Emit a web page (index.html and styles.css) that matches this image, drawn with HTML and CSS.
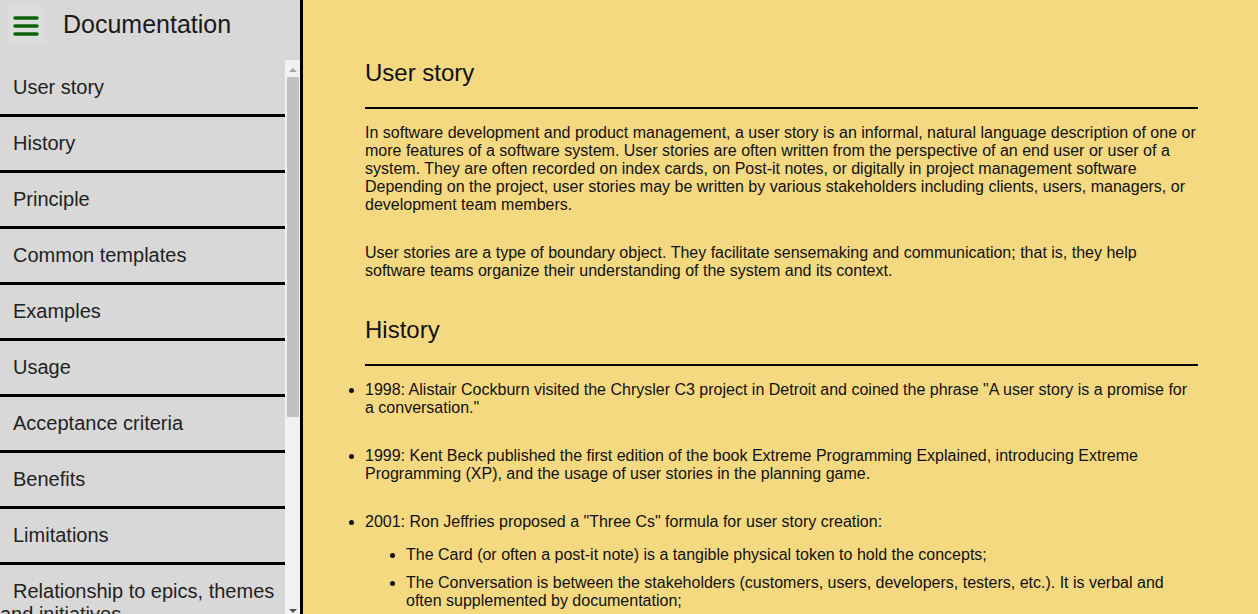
FILE: index.html
```html
<!DOCTYPE html>
<html lang="en">
<head>
<meta charset="utf-8">
<title>Documentation</title>
<link rel="stylesheet" href="styles.css">
</head>
<body>
<div class="page">
  <aside class="sidebar" id="navbar">
    <header class="side-header">
      <button class="menu-btn" aria-label="Menu">
        <svg width="26" height="22" viewBox="0 0 26 22">
          <line x1="2" y1="4" x2="24" y2="4" />
          <line x1="2" y1="12" x2="24" y2="12" />
          <line x1="2" y1="20" x2="24" y2="20" />
        </svg>
      </button>
      <span class="side-title">Documentation</span>
    </header>
    <div class="nav-wrap">
      <nav class="nav">
        <a class="nav-link" href="#User_story">User story</a>
        <a class="nav-link" href="#History">History</a>
        <a class="nav-link" href="#Principle">Principle</a>
        <a class="nav-link" href="#Common_templates">Common templates</a>
        <a class="nav-link" href="#Examples">Examples</a>
        <a class="nav-link" href="#Usage">Usage</a>
        <a class="nav-link" href="#Acceptance_criteria">Acceptance criteria</a>
        <a class="nav-link" href="#Benefits">Benefits</a>
        <a class="nav-link" href="#Limitations">Limitations</a>
        <a class="nav-link" href="#Relationship">Relationship to epics, themes and initiatives</a>
        <a class="nav-link" href="#Story_map">Story map</a>
        <a class="nav-link" href="#Comparison">Comparison with use cases</a>
        <a class="nav-link" href="#See_also">See also</a>
        <a class="nav-link" href="#References">References</a>
        <a class="nav-link" href="#Further_reading">Further reading</a>
      </nav>
      <div class="scrollbar" aria-hidden="true">
        <div class="sb-btn sb-up"><span class="tri tri-up"></span></div>
        <div class="sb-track"><div class="sb-thumb"></div></div>
        <div class="sb-btn sb-down"><span class="tri tri-down"></span></div>
      </div>
    </div>
  </aside>
  <main class="main" id="main-doc">
    <section class="doc-section" id="User_story">
      <h2 class="sec-title">User story</h2>
      <hr class="sec-rule">
      <div class="sec-body">
        <p>In software development and product management, a user story is an informal, natural language description of one or more features of a software system. User stories are often written from the perspective of an end user or user of a system. They are often recorded on index cards, on Post-it notes, or digitally in project management software Depending on the project, user stories may be written by various stakeholders including clients, users, managers, or development team members.</p>
        <p>User stories are a type of boundary object. They facilitate sensemaking and communication; that is, they help software teams organize their understanding of the system and its context.</p>
      </div>
    </section>
    <section class="doc-section" id="History">
      <h2 class="sec-title">History</h2>
      <hr class="sec-rule">
      <div class="sec-body">
        <ul class="list">
          <li>1998: Alistair Cockburn visited the Chrysler C3 project in Detroit and coined the phrase "A user story is a promise for a conversation."</li>
          <li>1999: Kent Beck published the first edition of the book Extreme Programming Explained, introducing Extreme Programming (XP), and the usage of user stories in the planning game.</li>
          <li>2001: Ron Jeffries proposed a "Three Cs" formula for user story creation:
            <ul class="sublist">
              <li>The Card (or often a post-it note) is a tangible physical token to hold the concepts;</li>
              <li>The Conversation is between the stakeholders (customers, users, developers, testers, etc.). It is verbal and often supplemented by documentation;</li>
              <li>The Confirmation ensures that the objectives of the conversation have been reached.</li>
            </ul>
          </li>
        </ul>
      </div>
    </section>
  </main>
</div>
</body>
</html>
```
FILE: styles.css
```css
html, body {
  margin: 0;
  padding: 0;
  height: 100%;
  overflow: hidden;
}

body {
  font-family: "Liberation Sans", Arial, sans-serif;
  color: #111;
}

.page {
  display: flex;
  height: 100vh;
}

.sidebar {
  width: 300px;
  flex: 0 0 300px;
  background: #d8d8d8;
  border-right: 3px solid #000;
  display: flex;
  flex-direction: column;
  min-height: 0;
}

.side-header {
  height: 61px;
  flex: 0 0 61px;
  display: flex;
  align-items: center;
  box-sizing: border-box;
  padding: 0 0 12px 7px;
}

.menu-btn {
  width: 38px;
  height: 38px;
  border: none;
  background: #dcdcdc;
  padding: 0;
  display: flex;
  align-items: center;
  justify-content: center;
  margin-right: 18px;
  cursor: pointer;
}

.menu-btn svg line {
  stroke: #0a640a;
  stroke-width: 3.4;
  stroke-linecap: round;
}

.side-title {
  font-size: 25px;
  color: #1a1a1a;
}

.nav-wrap {
  flex: 1;
  min-height: 0;
  display: flex;
  margin-top: -1px;
}

.nav {
  flex: 1;
  min-width: 0;
  overflow: hidden;
  display: flex;
  flex-direction: column;
  padding-top: 1px;
}

.scrollbar {
  width: 15px;
  flex: 0 0 15px;
  background: #f1f1f1;
  display: flex;
  flex-direction: column;
}

.sb-btn {
  height: 17px;
  flex: 0 0 17px;
  display: flex;
  justify-content: center;
}

.sb-up {
  align-items: center;
  padding-top: 3px;
  box-sizing: border-box;
}

.sb-down {
  align-items: flex-end;
  padding-bottom: 1px;
  box-sizing: border-box;
}

.tri {
  width: 0;
  height: 0;
  border-left: 4px solid transparent;
  border-right: 4px solid transparent;
}

.tri-up {
  border-bottom: 4px solid #a3a3a3;
}

.tri-down {
  border-top: 4px solid #505050;
}

.sb-track {
  flex: 1;
  min-height: 0;
}

.sb-thumb {
  height: 340px;
  margin: 0 1px 0 2px;
  background: #c1c1c1;
}

.nav-link {
  display: block;
  flex: 0 0 auto;
  padding: 15px 0;
  text-indent: 13px;
  font-size: 20px;
  line-height: 23px;
  color: #222;
  text-decoration: none;
  border-bottom: 3px solid #000;
}

.main {
  flex: 1;
  background: #f5d981;
  overflow: hidden;
  padding: 59px 60px 0 62px;
  min-width: 0;
}

.doc-section {
  margin-bottom: 36px;
}

.sec-title {
  margin: 0;
  font-size: 24px;
  line-height: 28px;
  font-weight: normal;
  color: #111;
}

.sec-rule {
  margin: 20px 0 15px;
  border: none;
  height: 2px;
  background: #000;
}

.sec-body {
  font-size: 16px;
  line-height: 18px;
}

.sec-body p {
  margin: 0 0 30px;
}

.sec-body p:last-child {
  margin-bottom: 0;
}

.list {
  margin: 0;
  padding: 0;
  list-style: disc;
}

.list > li {
  margin-bottom: 30px;
}

.sublist {
  margin: 15px 0 0;
  padding-left: 41px;
  list-style: disc;
}

.sublist > li {
  margin-bottom: 10px;
}
```
